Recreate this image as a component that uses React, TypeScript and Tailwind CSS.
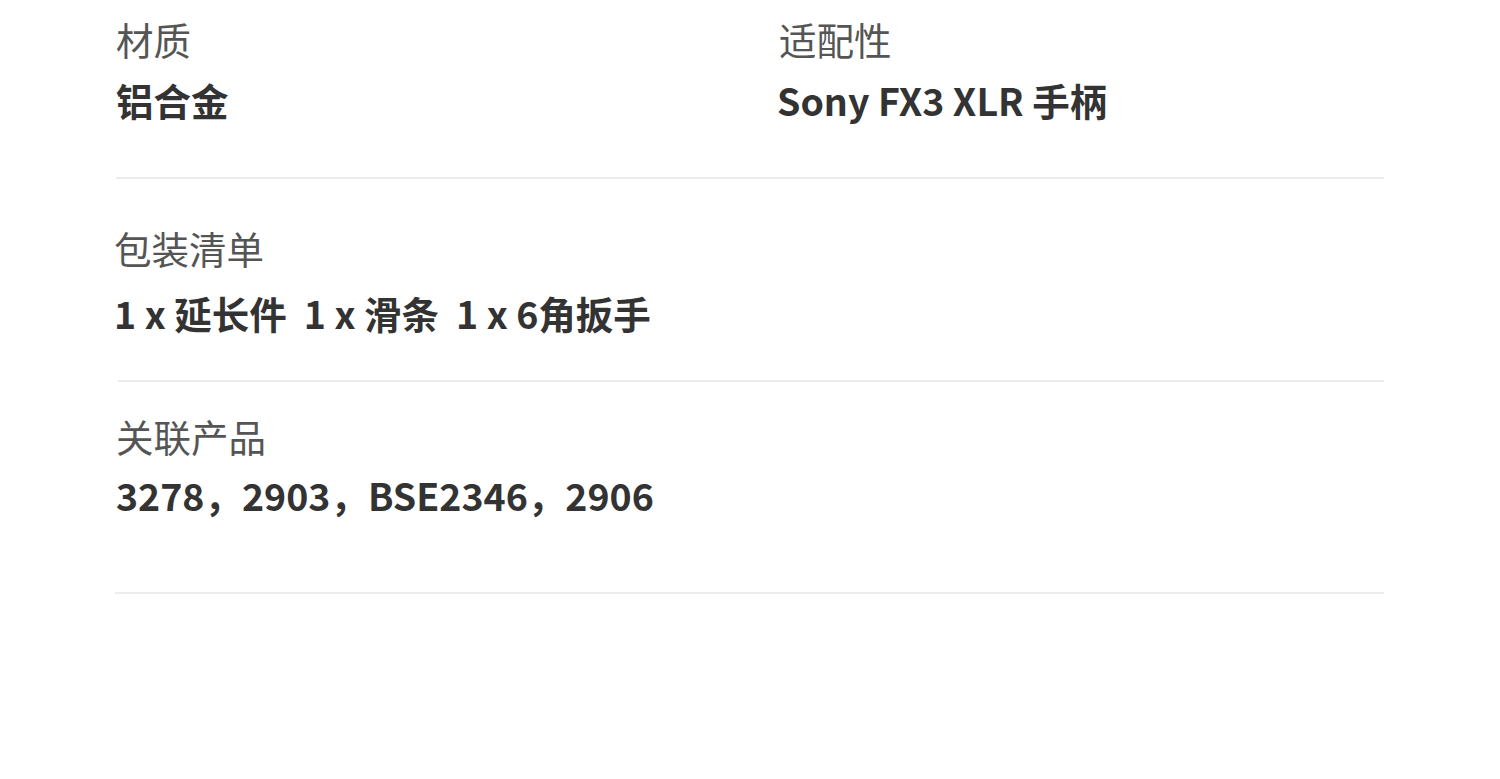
export default function App() {
  const font = { fontFamily: '"Noto Sans CJK SC", "Noto Sans", sans-serif' };
  return (
    <div className="w-[1500px] h-[779px] bg-white overflow-hidden" style={font}>
      <div className="ml-[116px] w-[1268px] flex flex-col">
        {/* Section 1 */}
        <div className="grid grid-cols-[663px_1fr] pt-[13px] pb-[51px]">
          <div className="flex flex-col gap-[9px]">
            <div className="text-[37.5px] leading-[52px] text-[#555555]">材质</div>
            <div className="text-[37.5px] leading-[52px] font-bold text-[#333333]">铝合金</div>
          </div>
          <div className="flex flex-col gap-[9px]">
            <div className="text-[37.5px] leading-[52px] text-[#555555]">适配性</div>
            <div className="text-[37.5px] leading-[52px] font-bold text-[#333333] -ml-[2px]">Sony FX3 XLR 手柄</div>
          </div>
        </div>
        <div className="h-[2px] bg-[#ececec]" />
        {/* Section 2 */}
        <div className="flex flex-col gap-[13px] pt-[43px] pb-[41px]">
          <div className="text-[37.5px] leading-[52px] text-[#555555] -ml-[2px]">包装清单</div>
          <div className="text-[37.5px] leading-[52px] font-bold text-[#333333] -ml-[2px]">1 x 延长件&nbsp;&nbsp;1 x 滑条&nbsp;&nbsp;1 x 6角扳手</div>
        </div>
        <div className="h-[2px] bg-[#ececec] ml-[2px]" />
        {/* Section 3 */}
        <div className="flex flex-col gap-[7px] pt-[28px] pb-[71px]">
          <div className="text-[37.5px] leading-[52px] text-[#555555]">关联产品</div>
          <div className="text-[37.5px] leading-[52px] font-bold text-[#333333]">3278，2903，BSE2346，2906</div>
        </div>
        <div className="h-[2px] bg-[#ececec] -ml-[1px]" />
      </div>
    </div>
  );
}
